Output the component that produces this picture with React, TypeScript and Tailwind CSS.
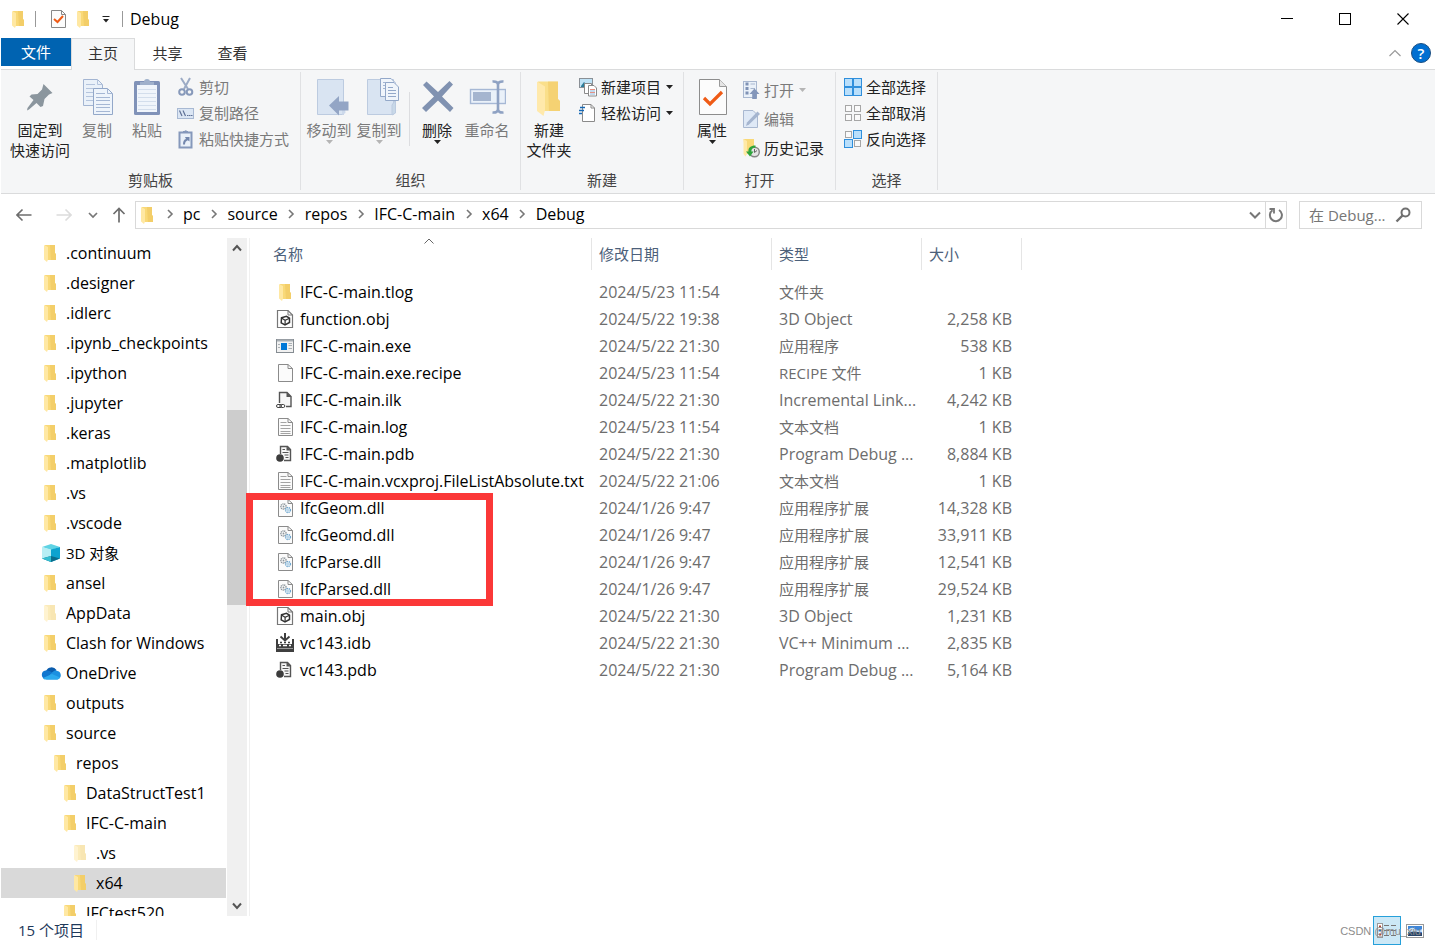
import type { ReactNode } from "react"

interface NavItem {
  label: string
  level: number
  icon?: "folder" | "faded" | "cube" | "cloud"
  selected?: boolean
}

interface FileRow {
  name: string
  date: string
  type: string
  size: string
  icon: keyof typeof fileIcons
}

const navItems: NavItem[] = [
  { label: ".continuum", level: 0 },
  { label: ".designer", level: 0 },
  { label: ".idlerc", level: 0 },
  { label: ".ipynb_checkpoints", level: 0 },
  { label: ".ipython", level: 0 },
  { label: ".jupyter", level: 0 },
  { label: ".keras", level: 0 },
  { label: ".matplotlib", level: 0 },
  { label: ".vs", level: 0 },
  { label: ".vscode", level: 0 },
  { label: "3D 对象", level: 0, icon: "cube" },
  { label: "ansel", level: 0 },
  { label: "AppData", level: 0, icon: "faded" },
  { label: "Clash for Windows", level: 0 },
  { label: "OneDrive", level: 0, icon: "cloud" },
  { label: "outputs", level: 0 },
  { label: "source", level: 0 },
  { label: "repos", level: 1 },
  { label: "DataStructTest1", level: 2 },
  { label: "IFC-C-main", level: 2 },
  { label: ".vs", level: 3, icon: "faded" },
  { label: "x64", level: 3, selected: true },
  { label: "IFCtest520", level: 2 },
]

const levelPadding = ["pl-[40px]", "pl-[50px]", "pl-[60px]", "pl-[70px]"]

const files: FileRow[] = [
  { name: "IFC-C-main.tlog", date: "2024/5/23 11:54", type: "文件夹", size: "", icon: "folder" },
  { name: "function.obj", date: "2024/5/22 19:38", type: "3D Object", size: "2,258 KB", icon: "obj" },
  { name: "IFC-C-main.exe", date: "2024/5/22 21:30", type: "应用程序", size: "538 KB", icon: "exe" },
  { name: "IFC-C-main.exe.recipe", date: "2024/5/23 11:54", type: "RECIPE 文件", size: "1 KB", icon: "blank" },
  { name: "IFC-C-main.ilk", date: "2024/5/22 21:30", type: "Incremental Link...", size: "4,242 KB", icon: "ilk" },
  { name: "IFC-C-main.log", date: "2024/5/23 11:54", type: "文本文档", size: "1 KB", icon: "text" },
  { name: "IFC-C-main.pdb", date: "2024/5/22 21:30", type: "Program Debug ...", size: "8,884 KB", icon: "pdb" },
  { name: "IFC-C-main.vcxproj.FileListAbsolute.txt", date: "2024/5/22 21:06", type: "文本文档", size: "1 KB", icon: "text" },
  { name: "IfcGeom.dll", date: "2024/1/26 9:47", type: "应用程序扩展", size: "14,328 KB", icon: "dll" },
  { name: "IfcGeomd.dll", date: "2024/1/26 9:47", type: "应用程序扩展", size: "33,911 KB", icon: "dll" },
  { name: "IfcParse.dll", date: "2024/1/26 9:47", type: "应用程序扩展", size: "12,541 KB", icon: "dll" },
  { name: "IfcParsed.dll", date: "2024/1/26 9:47", type: "应用程序扩展", size: "29,524 KB", icon: "dll" },
  { name: "main.obj", date: "2024/5/22 21:30", type: "3D Object", size: "1,231 KB", icon: "obj" },
  { name: "vc143.idb", date: "2024/5/22 21:30", type: "VC++ Minimum ...", size: "2,835 KB", icon: "idb" },
  { name: "vc143.pdb", date: "2024/5/22 21:30", type: "Program Debug ...", size: "5,164 KB", icon: "pdb" },
]

const crumbs = ["pc", "source", "repos", "IFC-C-main", "x64", "Debug"]

// Chinese labels run one pixel smaller than Latin ones
const textSize = (text: string) => (/[\u4e00-\u9fff]/.test(text) ? "text-[15px]" : "text-[16px]")

/* ---------- icons ---------- */

function Svg({ w, h, children, className = "" }: { w: number; h: number; children: ReactNode; className?: string }) {
  return (
    <svg width={w} height={h} viewBox={`0 0 ${w} ${h}`} fill="none" className={`shrink-0 ${className}`} aria-hidden="true">
      {children}
    </svg>
  )
}

function FolderIcon({ faded = false }: { faded?: boolean }) {
  return (
    <Svg w={20} h={20} className={faded ? "opacity-50" : ""}>
      <path d="M4 2H14V10L15 11V17H5Z" fill="#f9d978" />
      <path d="M9 2H14V10L15 11V17H10Z" fill="#edc35a" opacity="0.5" />
      <path d="M3 2L7 4V16.500L6 19L3 16.500Z" fill="#ffe8a3" />
    </Svg>
  )
}

function CubeIcon() {
  return (
    <Svg w={20} h={20}>
      <path d="M1 4L10 1L19 4L10 7Z" fill="#5fd3e4" />
      <path d="M1 4L10 6.5V19L1 15.5Z" fill="#b7eef4" />
      <path d="M10 6.5L19 4V15.5L10 19Z" fill="#0da3cf" />
      <path d="M1 15.5L10 13L19 15.5L10 19Z" fill="#0b6d8c" />
      <path d="M1 15.5L10 13V19Z" fill="#35bfd2" />
    </Svg>
  )
}

function CloudIcon() {
  return (
    <Svg w={20} h={14}>
      <path d="M5 5A6 6 0 0 1 15.500 4L12 8L3 7Z" fill="#0a5cad" />
      <path d="M4.500 4.600C7 4 9 5 11 6.500L7 13H4A4.300 4.300 0 0 1 4.500 4.600Z" fill="#0f76cf" />
      <path d="M11 6.500C13 4 16 4 16.500 5C21 6 21 13 16 13.500H5Z" fill="#1c90e0" />
      <path d="M2 12L11 8L19 11.500C18 13 17 13.500 16 13.500H4.500C3.500 13.500 2.500 13 2 12Z" fill="#2ba9ee" />
    </Svg>
  )
}

function Page({ children }: { children?: ReactNode }) {
  return (
    <Svg w={20} h={20}>
      <path d="M2.500 1.500H12L16.500 5.500V18.500H2.500Z" fill="#fbfbfb" stroke="#8b8b8b" />
      <path d="M12 1.500V5.500H16.500" stroke="#8b8b8b" />
      {children}
    </Svg>
  )
}

const fileIcons = {
  folder: <FolderIcon />,
  blank: <Page />,
  text: (
    <Page>
      <path d="M4.500 5.500H10.500M4.500 8.500H14.500M4.500 11.500H14.500M4.500 14.500H14.500M4.500 16.500H14.500" stroke="#a3a3a3" />
    </Page>
  ),
  dll: (
    <Page>
      <circle cx="7.500" cy="8.500" r="2.600" stroke="#8d959b" strokeWidth="1.500" strokeDasharray="1.200 0.600" />
      <circle cx="7.500" cy="8.500" r="0.900" fill="#8d959b" />
      <circle cx="12" cy="12" r="2.400" stroke="#6da6cf" strokeWidth="1.500" strokeDasharray="1.200 0.600" />
      <circle cx="12" cy="12" r="0.900" fill="#9cc5e2" />
    </Page>
  ),
  obj: (
    <Svg w={20} h={20}>
      <path d="M1.500 1.500H12L16.500 6V18.500H1.500Z" fill="#fff" stroke="#777" strokeWidth="1.200" />
      <path d="M12 1.500V6H16.500" stroke="#777" />
      <path d="M5.500 8.800L10.500 7.400L13.500 9.200V13.500L9 16L5.200 13.800Z" stroke="#333" strokeWidth="1.500" />
      <path d="M5.500 9L9.100 11.200L13.500 9.200M9.100 11.200V15.500" stroke="#333" strokeWidth="1.200" />
    </Svg>
  ),
  exe: (
    <Svg w={20} h={20}>
      <rect x="0.500" y="3.500" width="17" height="13" fill="#f1f1f1" stroke="#858c92" />
      <path d="M1 4.500H17" stroke="#a8afb4" strokeWidth="2" />
      <rect x="5" y="7" width="6" height="7" fill="#0078d7" />
      <path d="M2 8.500H4M2 11.500H4M12.500 7.500H16M12.500 9.500H16M12.500 12.500H16" stroke="#aab0b4" />
    </Svg>
  ),
  ilk: (
    <Svg w={20} h={20}>
      <path d="M3.500 13V2.500H11L15 6.500V16.500H10" fill="#f7f7f7" stroke="#555" strokeWidth="1.400" />
      <path d="M10.500 2L15.500 7H10.500Z" fill="#555" />
      <rect x="0.500" y="14.500" width="5" height="3" rx="1.500" stroke="#444" />
      <rect x="3.800" y="14.500" width="5" height="3" rx="1.500" stroke="#444" />
    </Svg>
  ),
  pdb: (
    <Svg w={20} h={20}>
      <path d="M4.500 10V2.500H11.500L14.500 5.500V16.500H8" fill="#f7f7f7" stroke="#555" strokeWidth="1.400" />
      <path d="M10.500 2V6.500H15Z" fill="#555" />
      <path d="M6.500 5.500H9M6.500 8.500H12.500M8.500 11H12.500M9.500 13.500H12.500" stroke="#555" strokeWidth="1.200" />
      <circle cx="4" cy="14" r="3.800" fill="#3c3c3c" />
    </Svg>
  ),
  idb: (
    <Svg w={20} h={20}>
      <path d="M9 0V6" stroke="#3f3f3f" strokeWidth="2" />
      <path d="M4.500 3.500L9 7.500L13.500 3.500" stroke="#3f3f3f" strokeWidth="1.800" />
      <path d="M0 6H2V11H16V6H18V19H0Z" fill="#3f3f3f" />
      <path d="M4 9.500H6M8 9.500H10M12 9.500H14" stroke="#3f3f3f" strokeWidth="1.600" />
      <path d="M3 12.500H5M7 12.500H11M13 12.500H15" stroke="#fff" strokeWidth="1.400" />
      <path d="M1 15.500H17" stroke="#9a9a9a" />
    </Svg>
  ),
}

const navIcons = {
  folder: <FolderIcon />,
  faded: <FolderIcon faded />,
  cube: <CubeIcon />,
  cloud: <CloudIcon />,
}

const pinIcon = (
  <Svg w={32} h={38}>
    <path d="M19.500 6L28.500 15L25 16.500L20.500 21L19 28L16.500 29L12.500 25L5 31.500L3 32.500L3.500 30L9.500 22L5.500 18.500L7.500 16.500L13.500 16L18 11.500Z" fill="#8b969e" />
  </Svg>
)

const copyIcon = (
  <Svg w={32} h={38}>
    <path d="M2.500 1.500H16.500L21.500 6.500V27.500H2.500Z" fill="#eaf1f9" stroke="#a3b5d2" />
    <path d="M16.500 1.500V6.500H21.500M5 6.500H14M5 10.500H18M5 14.500H18M5 18.500H18M5 22.500H18" stroke="#b4c4dd" />
    <path d="M12.500 10.500H26.500L31.500 15.500V36.500H12.500Z" fill="#eef4fb" stroke="#93a8c9" />
    <path d="M26.500 10.500V15.500H31.500M15 15.500H24M15 19.500H29M15 22.500H29M15 26.500H29M15 29.500H29M15 33.500H29" stroke="#a5b7d4" />
  </Svg>
)

const pasteIcon = (
  <Svg w={32} h={38}>
    <rect x="3" y="3" width="26" height="34" rx="1.500" fill="#8092b8" />
    <rect x="6" y="7" width="20" height="27" fill="#f0f5fb" />
    <path d="M7 11.500H25M7 15.500H25M7 19.500H25M7 23.500H25M7 27.500H25M7 31.500H25" stroke="#d3deec" />
    <path d="M9 7V4H13A3 3 0 0 1 19 4H23V7Z" fill="#9fb0cb" />
  </Svg>
)

const cutIcon = (
  <Svg w={18} h={20}>
    <path d="M4 1L11 12M13 1L7 12" stroke="#9cabc5" strokeWidth="2" />
    <circle cx="5" cy="15" r="2.800" stroke="#8799ba" strokeWidth="2" />
    <circle cx="12.500" cy="15" r="2.800" stroke="#8799ba" strokeWidth="2" />
  </Svg>
)

const pathIcon = (
  <Svg w={18} h={20}>
    <rect x="0.500" y="5.500" width="16" height="10" fill="#dbe6f4" stroke="#a8b9d3" />
    <path d="M2.500 7.500L5 13M6 7.500L8.500 13M10 12.500H11.500M12 12.500H13.500M14 12.500H15.500" stroke="#5f7196" strokeWidth="1.200" />
  </Svg>
)

const pasteLinkIcon = (
  <Svg w={18} h={20}>
    <rect x="2.500" y="3.500" width="12" height="15" fill="#eaf1f9" stroke="#8598bb" strokeWidth="2" />
    <path d="M6 4V2H7.500A1.500 1.500 0 0 1 10 2H11V4Z" fill="#8598bb" />
    <path d="M6 15.500C6 12 7 10.500 9 10L8 8H12.500V12.500L10.800 11.300C9 12 8 13.500 8 15.500Z" fill="#7488ae" />
  </Svg>
)

const moveToIcon = (
  <Svg w={40} h={38}>
    <path d="M8.500 1.500H34.500V36.500H8.500Z" fill="#d9e4f2" stroke="#bccbe0" />
    <path d="M33 30L35.500 25L36.500 35L33 37Z" fill="#ccd9eb" />
    <path d="M20 27.500L30 18V23.500H39.500V32.500H30V37.500Z" fill="#93a5c5" />
  </Svg>
)

const copyToIcon = (
  <Svg w={40} h={38}>
    <path d="M8.500 1.500H34.500V36.500H8.500Z" fill="#d9e4f2" stroke="#bccbe0" />
    <path d="M33 27L36.500 22V35L33 37Z" fill="#c8d8e8" stroke="#bccbe0" />
    <path d="M21.500 0.500H32L36 4.500V18.500H21.500Z" fill="#f0f5fb" stroke="#93a8c9" />
    <path d="M24 4.500H30M24 7.500H31M24 10.500H31" stroke="#a5b7d4" />
    <path d="M26.500 4.500H35L39.500 9V22.500H26.500Z" fill="#f0f5fb" stroke="#93a8c9" />
    <path d="M29 9.500H34M29 12.500H37M29 15.500H37M29 18.500H37" stroke="#93a8c9" />
  </Svg>
)

const deleteIcon = (
  <Svg w={34} h={38}>
    <path d="M3 7L6.500 3.500L18 14L29.500 3L33 6.500L22 18.500L33.500 30L30 34L18 22.500L6 34L2 30L14 18.500Z" fill="#8092b1" />
  </Svg>
)

const renameIcon = (
  <Svg w={38} h={38}>
    <rect x="2.500" y="11.500" width="35" height="14" fill="#eaf1f9" stroke="#a6b8d5" strokeWidth="1.400" />
    <rect x="5" y="14" width="18" height="9" fill="#a5b5cf" />
    <path d="M24.500 3.500Q30 3 30 7Q30 3 35.500 3.500M30 6V32M24.500 34.500Q30 35 30 31Q30 35 35.500 34.500" stroke="#8fa2c3" strokeWidth="2.600" />
  </Svg>
)

const bigFolderIcon = (
  <Svg w={32} h={38}>
    <path d="M5 3.500H25V21L27 23V33H9Z" fill="#fadf8a" />
    <path d="M15 3.500H25V21L27 23V33H16Z" fill="#f0c65c" opacity="0.500" />
    <path d="M4 3.500L12 8.500V32L10.500 38L4 33Z" fill="#ffe9ab" />
  </Svg>
)

const propertiesIcon = (
  <Svg w={32} h={38}>
    <path d="M3.500 1.500H23.500L30.500 8.500V36.500H3.500Z" fill="#fcfcfc" stroke="#8d8d8d" />
    <path d="M23.500 1.500V8.500H30.500" fill="#e5e5e5" stroke="#9a9a9a" />
    <path d="M8 20L14 26L26 14" stroke="#ef5b16" strokeWidth="3.200" />
  </Svg>
)

const newItemIcon = (
  <Svg w={18} h={20}>
    <rect x="0.500" y="1.500" width="13" height="9" fill="#bfe3f7" stroke="#8a9096" />
    <path d="M2 9L5 5L8 8V10H2Z" fill="#2d7d9a" />
    <path d="M5.500 6.500H12.500V16.500H5.500Z" fill="#fff" stroke="#8a8a8a" />
    <path d="M9.500 8.500H15L17.500 11V19H9.500Z" fill="#fff" stroke="#8a8a8a" />
    <path d="M11 12.500H16M11 15.500H16" stroke="#e59184" />
    <path d="M11 14H16M11 17H16" stroke="#88b4dc" />
  </Svg>
)

const easyAccessIcon = (
  <Svg w={18} h={20}>
    <path d="M3.500 1.500H12L15.500 5V18.500H3.500Z" fill="#fff" stroke="#8a8a8a" />
    <path d="M12 1.500V5H15.500" stroke="#8a8a8a" />
    <path d="M1 4.500H6M0 7.500H5M0 10.500H3" stroke="#1769b5" strokeWidth="1.300" />
  </Svg>
)

const openIcon = (
  <Svg w={18} h={20}>
    <rect x="1.500" y="1.500" width="13" height="16" fill="#eaf1f9" stroke="#a9b8d0" />
    <path d="M3.500 4H6.500M3.500 8.500H6.500M3.500 13H6.500" stroke="#7f92b5" strokeWidth="3" />
    <path d="M8.500 4H13M8.500 8.500H13" stroke="#a9b8d0" />
    <path d="M12.500 8.500L17.500 14H14.800V19H10.200V14H7.500Z" fill="#8396ba" />
  </Svg>
)

const editIcon = (
  <Svg w={18} h={20}>
    <path d="M1.500 1.500H11L15.500 6V18.500H1.500Z" fill="#dfe9f6" stroke="#a9b8d0" />
    <path d="M4 17L5 13.500L15.500 2.500L18 5L7 15.500Z" fill="#a5b5cf" />
  </Svg>
)

const historyIcon = (
  <Svg w={18} h={20}>
    <path d="M1.500 1H12V16H3.500Z" fill="#f9d978" />
    <path d="M1.500 1L5 3V16L3.500 18.500L1.500 16Z" fill="#ffe9a6" />
    <circle cx="12.500" cy="14" r="4.800" fill="#e4e4e4" stroke="#858585" strokeWidth="1.400" />
    <path d="M12.500 11V14.500L15 12.500" stroke="#666" />
    <path d="M13.500 7.500C8.500 7.500 6 10 6.500 13.500H4L8 18.500L11.500 13.500H9.300C9.500 11 10.500 9.500 13.500 9.500Z" fill="#2ea43c" />
  </Svg>
)

function GridIcon({ on }: { on: boolean[] }) {
  return (
    <Svg w={18} h={20}>
      {on.map((active, i) => (
        <rect
          key={i}
          x={(i % 2) * 9 + (active ? 0.5 : 1.5)}
          y={Math.floor(i / 2) * 9 + (active ? 1.5 : 2.5)}
          width={active ? 8 : 6}
          height={active ? 8 : 6}
          fill={active ? "#b9dffb" : "#fafafa"}
          stroke={active ? "#2f8fdc" : "#a6a6a6"}
        />
      ))}
    </Svg>
  )
}

function Triangle({ muted = false }: { muted?: boolean }) {
  return (
    <Svg w={7} h={4}>
      <path d="M0 0H7L3.500 4Z" fill={muted ? "#b5b5b5" : "#222"} />
    </Svg>
  )
}

function ChevronRight() {
  return (
    <Svg w={8} h={10}>
      <path d="M2 1L6 5L2 9" stroke="#777" strokeWidth="1.600" />
    </Svg>
  )
}

/* ---------- ribbon ---------- */

function Group({ label, className, children }: { label: string; className: string; children: ReactNode }) {
  return (
    <section className={`flex flex-col border-r border-[#e0e1e3] ${className}`}>
      <div className="flex flex-1 pl-[3px]">{children}</div>
      <h2 className="h-5 text-center text-[#444]">{label}</h2>
    </section>
  )
}

interface BigButtonProps {
  icon: ReactNode
  lines: string[]
  className?: string
  disabled?: boolean
  arrow?: boolean
}

function BigButton({ icon, lines, className = "w-[50px]", disabled = false, arrow = false }: BigButtonProps) {
  return (
    <button type="button" disabled={disabled} className={`flex flex-col items-center whitespace-nowrap pt-1.5 ${disabled ? "text-[#7a7a7a]" : "text-[#222]"} ${className}`}>
      {icon}
      <span className="mt-1 flex flex-col">
        {lines.map((line) => (
          <span key={line}>{line}</span>
        ))}
      </span>
      {arrow && <Triangle muted={disabled} />}
    </button>
  )
}

interface SmallButtonProps {
  icon: ReactNode
  label: string
  disabled?: boolean
  arrow?: boolean
}

function SmallButton({ icon, label, disabled = false, arrow = false }: SmallButtonProps) {
  return (
    <button type="button" disabled={disabled} className={`flex items-center whitespace-nowrap ${disabled ? "text-[#7a7a7a]" : "text-[#222]"}`}>
      {icon}
      <span className="mr-[5px] ml-1">{label}</span>
      {arrow && <Triangle muted={disabled} />}
    </button>
  )
}

function Ribbon() {
  return (
    <div className="flex h-[125px] border-y border-[#dadbdc] bg-[#f5f6f7] pt-0.5 pb-[3px]">
      <Group label="剪贴板" className="w-[300px]">
        <BigButton icon={pinIcon} lines={["固定到", "快速访问"]} className="w-[72px]" />
        <BigButton icon={copyIcon} lines={["复制"]} className="w-[42px]" disabled />
        <BigButton icon={pasteIcon} lines={["粘贴"]} className="w-[58px]" disabled />
        <div className="flex flex-col gap-1.5 pt-[5px] pl-px">
          <SmallButton icon={cutIcon} label="剪切" disabled />
          <SmallButton icon={pathIcon} label="复制路径" disabled />
          <SmallButton icon={pasteLinkIcon} label="粘贴快捷方式" disabled />
        </div>
      </Group>
      <Group label="组织" className="w-[220px]">
        <BigButton icon={moveToIcon} lines={["移动到"]} disabled arrow />
        <BigButton icon={copyToIcon} lines={["复制到"]} disabled arrow />
        <div className="mt-5 mr-0.5 ml-[5px] h-[54px] w-px bg-[#dcdde0]" />
        <BigButton icon={deleteIcon} lines={["删除"]} arrow />
        <BigButton icon={renameIcon} lines={["重命名"]} disabled />
      </Group>
      <Group label="新建" className="w-[163px]">
        <BigButton icon={bigFolderIcon} lines={["新建", "文件夹"]} />
        <div className="flex flex-col gap-1.5 pt-[5px] pl-[5px]">
          <SmallButton icon={newItemIcon} label="新建项目" arrow />
          <SmallButton icon={easyAccessIcon} label="轻松访问" arrow />
        </div>
      </Group>
      <Group label="打开" className="w-[152px]">
        <BigButton icon={propertiesIcon} lines={["属性"]} arrow />
        <div className="flex flex-col gap-[9px] pt-2 pl-[5px]">
          <SmallButton icon={openIcon} label="打开" disabled arrow />
          <SmallButton icon={editIcon} label="编辑" disabled />
          <SmallButton icon={historyIcon} label="历史记录" />
        </div>
      </Group>
      <Group label="选择" className="w-[102px]">
        <div className="flex flex-col gap-1.5 pt-[5px] pl-[5px]">
          <SmallButton icon={<GridIcon on={[true, true, true, true]} />} label="全部选择" />
          <SmallButton icon={<GridIcon on={[false, false, false, false]} />} label="全部取消" />
          <SmallButton icon={<GridIcon on={[false, true, true, false]} />} label="反向选择" />
        </div>
      </Group>
    </div>
  )
}

/* ---------- window parts ---------- */

function TitleBar() {
  return (
    <header className="flex h-[38px] items-center">
      <div className="flex flex-1 items-center pl-2">
        <FolderIcon />
        <div className="ml-1.5 h-4 w-px bg-[#999]" />
        <button type="button" aria-label="属性" className="ml-[14px]">
          <Svg w={18} h={20}>
            <path d="M1.500 1.500H11.500L15.500 5.500V18.500H1.500Z" fill="#fcfcfc" stroke="#888" />
            <path d="M11.500 1.500V5.500H15.500" stroke="#888" />
            <path d="M4 10L7.500 13L13 7" stroke="#ef5b16" strokeWidth="2" />
          </Svg>
        </button>
        <button type="button" aria-label="新建文件夹" className="ml-1.5">
          <FolderIcon />
        </button>
        <button type="button" aria-label="自定义" className="ml-2">
          <Svg w={8} h={8}>
            <path d="M0.500 1.500H7.500" stroke="#222" />
            <path d="M1 4H7L4 7.500Z" fill="#222" />
          </Svg>
        </button>
        <div className="ml-3 h-4 w-px bg-[#999]" />
        <h1 className="ml-[7px] text-[16px] text-black">Debug</h1>
      </div>
      <div className="flex h-full pr-[3px]">
        <button type="button" aria-label="最小化" className="flex w-[58px] items-center justify-center">
          <Svg w={12} h={12}>
            <path d="M0 5.500H12" stroke="#000" />
          </Svg>
        </button>
        <button type="button" aria-label="最大化" className="flex w-[58px] items-center justify-center">
          <Svg w={12} h={12}>
            <rect x="0.500" y="0.500" width="11" height="11" stroke="#000" />
          </Svg>
        </button>
        <button type="button" aria-label="关闭" className="flex w-[58px] items-center justify-center">
          <Svg w={12} h={12}>
            <path d="M0.500 0.500L11.500 11.500M11.500 0.500L0.500 11.500" stroke="#000" strokeWidth="1.100" />
          </Svg>
        </button>
      </div>
    </header>
  )
}

function Tabs() {
  return (
    <nav className="flex h-[31px] text-[#333]">
      <button type="button" className="h-7 w-[70px] bg-[#0063b1] text-white">
        文件
      </button>
      <button type="button" className="relative z-10 -mb-px w-16 border border-b-0 border-[#dadbdc] bg-[#f5f6f7] pb-[3px]">
        主页
      </button>
      <button type="button" className="w-[65px] pb-0.5">
        共享
      </button>
      <button type="button" className="w-[65px] pb-0.5">
        查看
      </button>
      <div className="flex flex-1 items-center justify-end gap-2.5 pr-1 pb-0.5">
        <button type="button" aria-label="折叠功能区">
          <Svg w={12} h={8}>
            <path d="M0.500 7L6 1.500L11.500 7" stroke="#9a9a9a" strokeWidth="1.200" />
          </Svg>
        </button>
        <button type="button" aria-label="帮助" className="flex size-5 items-center justify-center rounded-full border border-[#1b4f82] bg-[#006fd1] font-semibold text-white">
          ?
        </button>
      </div>
    </nav>
  )
}

function AddressBar() {
  return (
    <div className="flex h-11 items-center pr-[13px] pb-0.5 pl-[15px] text-[16px] text-black">
      <button type="button" aria-label="后退">
        <Svg w={16} h={14}>
          <path d="M1 7H15.500M6.500 1.500L1 7L6.500 12.500" stroke="#6d6d6d" strokeWidth="1.600" />
        </Svg>
      </button>
      <button type="button" aria-label="前进" disabled className="ml-6">
        <Svg w={16} h={14}>
          <path d="M0.500 7H15M9.500 1.500L15 7L9.500 12.500" stroke="#dcdcdc" strokeWidth="1.600" />
        </Svg>
      </button>
      <button type="button" aria-label="最近位置" className="ml-4">
        <Svg w={10} h={8}>
          <path d="M1 2L5 6L9 2" stroke="#777" strokeWidth="1.700" />
        </Svg>
      </button>
      <button type="button" aria-label="上移" className="ml-[14px]">
        <Svg w={14} h={16}>
          <path d="M7 1.500V15.500M1.500 7L7 1.500L12.500 7" stroke="#6d6d6d" strokeWidth="1.700" />
        </Svg>
      </button>
      <div className="ml-[9px] flex h-7 flex-1 items-center border border-[#d9d9d9] pl-0.5">
        <FolderIcon />
        <ol className="-ml-0.5 flex flex-1 items-center pb-0.5">
          {crumbs.map((crumb) => (
            <li key={crumb} className="flex items-center">
              <span className="flex w-[27px] justify-center">
                <ChevronRight />
              </span>
              <a href="#">{crumb}</a>
            </li>
          ))}
        </ol>
        <button type="button" aria-label="以前的位置" className="flex h-full w-5 items-center justify-center">
          <Svg w={12} h={8}>
            <path d="M1 1.500L6 6.500L11 1.500" stroke="#777" strokeWidth="2" />
          </Svg>
        </button>
        <button type="button" aria-label="刷新" className="flex h-full w-[21px] items-center justify-center border-l border-[#d9d9d9]">
          <Svg w={16} h={16}>
            <path d="M4.500 3.200A6 6 0 1 0 11 3" stroke="#777" strokeWidth="2" />
            <path d="M1.500 2H6V6.500" stroke="#777" strokeWidth="1.800" />
          </Svg>
        </button>
      </div>
      <div className="ml-3 flex h-7 w-[123px] items-center border border-[#d9d9d9] pr-2.5 pl-[9px] text-[15px]">
        <input aria-label="搜索" placeholder="在 Debug..." className="min-w-0 flex-1 pb-px outline-none placeholder:text-[#767676]" />
        <Svg w={16} h={16}>
          <circle cx="10.500" cy="5.500" r="4" stroke="#707070" strokeWidth="2" />
          <path d="M7.500 8.500L1.500 14.500" stroke="#707070" strokeWidth="2.400" />
        </Svg>
      </div>
    </div>
  )
}

function NavPane() {
  return (
    <aside className="flex w-[249px] shrink-0 border-r border-[#f0f0f0]">
      <ul className="w-[225px] overflow-hidden text-black">
        {navItems.map((item, index) => (
          <li key={index} className={`flex h-[30px] items-center gap-[5px] ${levelPadding[item.level]} ${item.selected ? "bg-[#d9d9d9]" : ""}`}>
            <span className="flex w-5 justify-center">{navIcons[item.icon ?? "folder"]}</span>
            <a href="#" className={`whitespace-nowrap ${textSize(item.label)}`}>
              {item.label}
            </a>
          </li>
        ))}
      </ul>
      <div className="ml-px flex w-5 flex-col items-center bg-[#f0f0f0]">
        <div className="flex h-5 items-center">
          <Svg w={10} h={8}>
            <path d="M1 6.500L5 2L9 6.500" stroke="#555" strokeWidth="2" />
          </Svg>
        </div>
        <div className="mt-[152px] h-[195px] w-full bg-[#cdcdcd]" />
        <div className="mt-auto flex h-5 items-center">
          <Svg w={10} h={8}>
            <path d="M1 1.500L5 6L9 1.500" stroke="#555" strokeWidth="2" />
          </Svg>
        </div>
      </div>
    </aside>
  )
}

function HeaderCell({ label, width, sorted = false }: { label: string; width: string; sorted?: boolean }) {
  return (
    <th className={`p-0 pb-2 text-left font-normal text-[#4c607a] ${width}`}>
      <div className={`relative flex h-8 items-center border-r border-[#e5e5e5] pl-[7px] ${sorted ? "ml-4" : ""}`}>
        {label}
        {sorted && (
          <Svg w={10} h={6} className="absolute inset-x-0 top-0 mx-auto">
            <path d="M0.500 5.500L5 1L9.500 5.500" stroke="#666" />
          </Svg>
        )}
      </div>
    </th>
  )
}

function FileList() {
  return (
    <main className="relative flex-1">
      <table className="w-[772px] table-fixed border-collapse">
        <thead>
          <tr>
            <HeaderCell label="名称" width="w-[342px]" sorted />
            <HeaderCell label="修改日期" width="w-[180px]" />
            <HeaderCell label="类型" width="w-[150px]" />
            <HeaderCell label="大小" width="w-[100px]" />
          </tr>
        </thead>
        <tbody className="text-[16px] whitespace-nowrap text-[#6d6d6d]">
          {files.map((file) => (
            <tr key={file.name} className="h-[27px]">
              <td className="p-0 pl-[26px] text-black">
                <div className="flex items-center gap-1">
                  {fileIcons[file.icon]}
                  {file.name}
                </div>
              </td>
              <td className="p-0 pl-[7px]">{file.date}</td>
              <td className={`p-0 pl-[7px] ${textSize(file.type)}`}>{file.type}</td>
              <td className="p-0 pr-[10px] text-right">{file.size}</td>
            </tr>
          ))}
        </tbody>
      </table>
      {/* marker around the four IfcOpenShell dlls */}
      <div className="absolute top-[255px] -left-1 h-[113px] w-[247px] border-[7px] border-[#fb3838]" />
    </main>
  )
}

function StatusBar() {
  return (
    <footer className="relative flex h-[30px] items-start pr-2.5 pl-[17px] text-[#1e395b]">
      <span className="mt-1 border-r border-[#f0f0f0] pr-3">15 个项目</span>
      <div className="ml-auto flex items-center gap-[5px]">
        <button type="button" aria-label="详细信息" className="flex h-[29px] w-7 items-center justify-center border border-[#26a0da] bg-[#cce8f6]">
          <Svg w={20} h={18}>
            <rect x="0.500" y="1.500" width="5" height="14" fill="#fff" stroke="#999" />
            <path d="M2 4.500H4M2 12.500H4" stroke="#b04030" strokeWidth="2" />
            <path d="M2 8.500H4" stroke="#317ac0" strokeWidth="2" />
            <path d="M7 3.500H12M14 3.500H19M7 8.500H12M14 8.500H19M7 13.500H12M14 13.500H19" stroke="#777" />
          </Svg>
        </button>
        <button type="button" aria-label="大缩略图">
          <Svg w={19} h={14}>
            <rect x="0.500" y="0.500" width="17" height="13" fill="#fff" stroke="#999" />
            <rect x="2" y="2" width="14" height="10" fill="#3f87d8" />
            <path d="M2 6Q6 2 9 5T16 5V8H2Z" fill="#c6e0f7" />
            <path d="M2 9Q7 6 16 9V12H2Z" fill="#27456a" />
          </Svg>
        </button>
      </div>
      <span className="absolute right-3.5 bottom-[7px] font-['Liberation_Sans',sans-serif] text-[11px] leading-4 text-[#8c8c8c]">CSDN @mu_xiu</span>
    </footer>
  )
}

export default function App() {
  return (
    <div className="flex h-screen flex-col overflow-hidden bg-white pl-px font-['Open_Sans','Noto_Sans_CJK_SC',sans-serif] text-[15px] leading-5">
      <TitleBar />
      <Tabs />
      <Ribbon />
      <AddressBar />
      <div className="flex min-h-0 flex-1">
        <NavPane />
        <FileList />
      </div>
      <StatusBar />
    </div>
  )
}
